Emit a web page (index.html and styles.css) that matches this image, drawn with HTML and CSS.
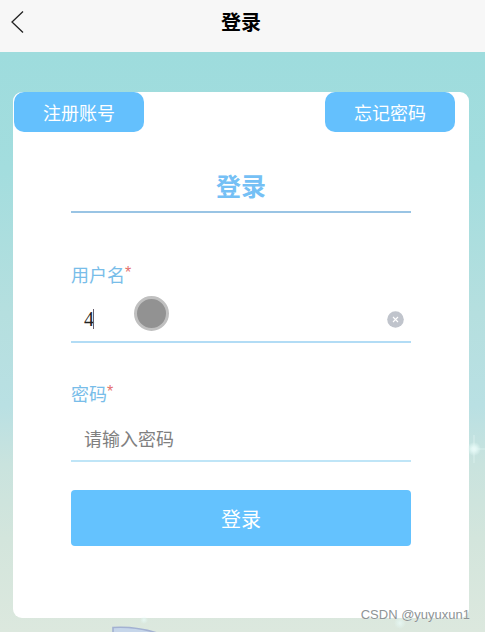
FILE: index.html
```html
<!DOCTYPE html>
<html lang="zh-CN">
<head>
    <meta charset="UTF-8">
    <title>登录</title>
    <link rel="stylesheet" href="styles.css">
</head>
<body>
<div class="header">
    <svg class="back" width="14" height="24" viewBox="0 0 14 24">
        <path d="M13 1.5 L2 12 L13 22.5" fill="none" stroke="#222" stroke-width="1.3"/>
    </svg>
    <h1>登录</h1>
</div>
<div class="page">
    <div class="card">
        <div class="links">
            <button type="button" class="link-btn">注册账号</button>
            <button type="button" class="link-btn">忘记密码</button>
        </div>
        <form class="form">
            <h2>登录</h2>
            <label class="label">用户名<span class="required">*</span></label>
            <div class="field user">
                <span class="value">4</span><span class="caret"></span>
                <svg class="clear" width="17" height="17" viewBox="0 0 17 17">
                    <circle cx="8.5" cy="8.5" r="8.3" fill="#c0c4cc"/>
                    <path d="M6 6 L11 11 M11 6 L6 11" stroke="#fff" stroke-width="1.1"/>
                </svg>
                <span class="touch"></span>
            </div>
            <label class="label">密码<span class="required">*</span></label>
            <div class="field pass">
                <span class="placeholder">请输入密码</span>
            </div>
            <button type="button" class="submit">登录</button>
        </form>
    </div>
    <svg class="scene" width="485" height="580" viewBox="0 52 485 580">
        <defs>
            <radialGradient id="glow">
                <stop offset="0" stop-color="#f2ffff"/>
                <stop offset="0.4" stop-color="#e6faf7" stop-opacity="0.8"/>
                <stop offset="1" stop-color="#e6faf7" stop-opacity="0"/>
            </radialGradient>
        </defs>
        <circle cx="474" cy="449" r="7" fill="url(#glow)"/>
        <path d="M474 435 V463 M470 449 H485" stroke="#e4f7f4" stroke-width="1" opacity="0.6"/>
        <circle cx="144" cy="620" r="4" fill="url(#glow)" opacity="0.6"/>
        <circle cx="400" cy="623" r="6" fill="url(#glow)" opacity="0.6"/>
        <path d="M113 634 L113 627.5 Q137 626 160 634 Z" fill="#c6d6ea" stroke="#a3b1d2" stroke-width="1.6"/>
    </svg>
    <div class="watermark">CSDN @yuyuxun1</div>
</div>
</body>
</html>
```

FILE: styles.css
```css
* {
    box-sizing: border-box;
}
body {
    margin: 0;
    height: 632px;
    overflow: hidden;
    font-family: "Liberation Sans", "Noto Sans CJK SC", sans-serif;
}
.header {
    position: relative;
    height: 52px;
    padding: 8px 3px 0 0;
    background: #f7f7f7;
}
.back {
    position: absolute;
    left: 10px;
    top: 10px;
}
h1 {
    margin: 0;
    font-size: 20px;
    line-height: 30px;
    text-align: center;
    color: #000;
}
.page {
    position: relative;
    height: 580px;
    padding: 40px 16px 0 13px;
    background: linear-gradient(#9edcdd 0%, #a3ddde 20%, #b5dfdf 45%, #b9e0e3 61%, #c9e3de 71%, #d3e5dc 84%, #dce8de 100%);
}
.card {
    height: 526px;
    background: #fff;
    border-radius: 9px;
}
.links {
    display: flex;
    justify-content: space-between;
    padding: 0 14px 0 1px;
}
.link-btn {
    width: 130px;
    height: 40px;
    padding: 4px 0 0;
    border: none;
    border-radius: 10px;
    background: #64c0fd;
    color: #fff;
    font-family: inherit;
    font-size: 18px;
    line-height: 36px;
}
.form {
    padding: 34px 58px 0;
}
h2 {
    margin: 0 0 48px;
    height: 47px;
    border-bottom: 2px solid #99c4e4;
    color: #75c0f5;
    font-size: 25px;
    line-height: 42px;
    text-align: center;
}
.label {
    display: block;
    height: 30px;
    color: #78bde9;
    font-size: 18px;
    line-height: 30px;
}
.required {
    display: inline-block;
    color: #e56f6c;
    font-size: 16px;
    line-height: 16px;
    vertical-align: 4px;
}
.field {
    position: relative;
    display: flex;
    align-items: center;
    height: 52px;
    padding: 0 7px 0 13px;
    border-bottom: 2px solid #b2dcf5;
}
.user {
    margin-bottom: 37px;
}
.pass {
    border-bottom-color: #bfe5f7;
    margin-bottom: 28px;
}
.value {
    width: 9px;
    color: #222;
    font-family: "Liberation Serif", serif;
    font-size: 20px;
    padding-top: 6px;
}
.caret {
    width: 1px;
    height: 20px;
    margin-top: 6px;
    background: #665d6c;
}
.clear {
    margin: 6px 0 0 auto;
}
.touch {
    position: absolute;
    left: 63px;
    top: 5px;
    width: 35px;
    height: 35px;
    border: 3px solid #c0c0c0;
    border-radius: 50%;
    background: #929292;
}
.placeholder {
    padding-top: 5px;
    color: #808080;
    font-size: 18px;
}
.submit {
    display: block;
    width: 100%;
    height: 56px;
    padding: 0;
    border: none;
    border-radius: 4px;
    background: #64c2fe;
    color: #fff;
    font-family: inherit;
    font-size: 20px;
}
.scene {
    position: absolute;
    left: 0;
    top: 0;
}
.watermark {
    position: absolute;
    right: 15px;
    bottom: 9px;
    color: #8e9496;
    font-size: 13px;
    line-height: 16px;
    text-shadow: 0 0 1px #fff;
}
```
